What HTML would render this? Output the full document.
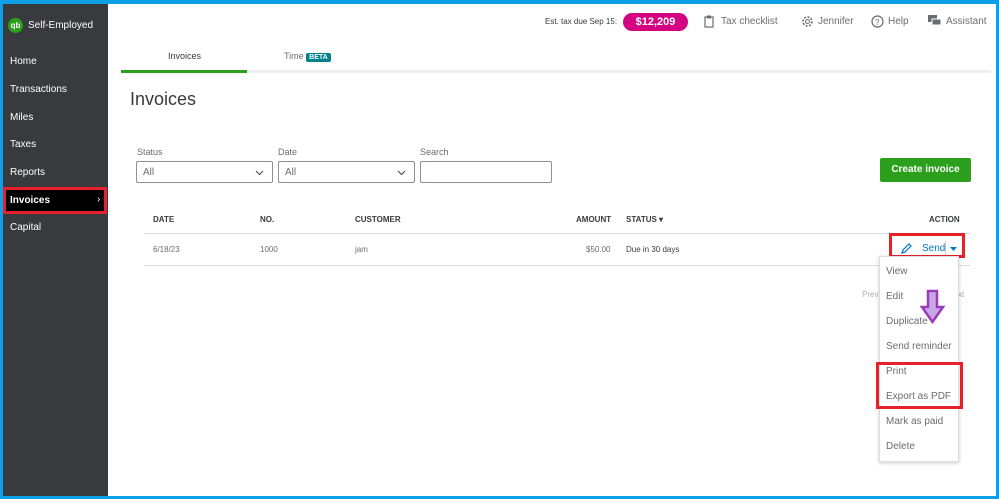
<!DOCTYPE html>
<html><head><style>
*{box-sizing:border-box;margin:0;padding:0}
body{width:999px;height:499px;overflow:hidden;font-family:"Liberation Sans",sans-serif;background:#fff;position:relative}
.frame{position:absolute;inset:0;border:3px solid #0ea0e6;border-top-width:4px;pointer-events:none;z-index:10}
.side{position:absolute;left:0;top:0;width:108px;height:499px;background:#393a3d;color:#fff}
.side .it{position:absolute;left:10px;font-size:10px}
.a{position:absolute;font-size:10px;color:#393a3d;white-space:nowrap}
.sel{position:absolute;height:22px;border:1px solid #8d9096;border-radius:2px;background:#fff}
.hd{position:absolute;font-size:8px;font-weight:bold;color:#393a3d}
.menu{position:absolute;left:879px;top:256px;width:80px;height:206px;background:#fff;border:1px solid #ddd;box-shadow:0 1px 4px rgba(0,0,0,.2)}
.menu div{position:absolute;left:6px;font-size:10px;color:#6b6c72}
.red{position:absolute;border:3px solid #e8202a}
svg{position:absolute}
</style></head><body>
<div class="side">
 <div style="position:absolute;left:8px;top:18px;width:15px;height:15px;border-radius:50%;background:#2ca01c;color:#fff;font-size:8px;font-weight:bold;text-align:center;line-height:15px">qb</div>
 <div class="it" style="left:28px;top:20px">Self-Employed</div>
 <div class="it" style="top:56px">Home</div>
 <div class="it" style="top:84px">Transactions</div>
 <div class="it" style="top:112px">Miles</div>
 <div class="it" style="top:139px">Taxes</div>
 <div class="it" style="top:167px">Reports</div>
 <div style="position:absolute;left:3px;top:187px;width:104px;height:27px;background:#000;border:3px solid #e8202a"></div>
 <div class="it" style="top:195px;font-weight:bold">Invoices</div>
 <div class="it" style="left:97px;top:194px">›</div>
 <div class="it" style="top:222px">Capital</div>
</div>
<div class="a" style="left:545px;top:17px;font-size:8px">Est. tax due Sep 15:</div>
<div style="position:absolute;left:623px;top:13px;width:65px;height:18px;border-radius:9px;background:#d4037f;color:#fff;font-weight:bold;font-size:11px;text-align:center;line-height:18px">$12,209</div>
<svg style="left:704px;top:15px" width="10" height="13"><rect x="1" y="2" width="8" height="10" fill="none" stroke="#6b6c72" stroke-width="1.2"/><rect x="3" y="0.5" width="4" height="3" fill="#6b6c72"/></svg>
<div class="a" style="left:721px;top:16px;color:#6b6c72">Tax checklist</div>
<svg style="left:801px;top:15px" width="13" height="13"><circle cx="6.5" cy="6.5" r="4.5" fill="none" stroke="#6b6c72" stroke-width="1.6" stroke-dasharray="2 1.5"/><circle cx="6.5" cy="6.5" r="2" fill="none" stroke="#6b6c72"/></svg>
<div class="a" style="left:818px;top:16px;color:#6b6c72">Jennifer</div>
<svg style="left:871px;top:15px" width="13" height="13"><circle cx="6.5" cy="6.5" r="5.5" fill="none" stroke="#6b6c72" stroke-width="1.2"/><text x="4" y="10" font-size="8" font-family="Liberation Sans" fill="#6b6c72">?</text></svg>
<div class="a" style="left:888px;top:16px;color:#6b6c72">Help</div>
<svg style="left:928px;top:15px" width="14" height="12"><rect x="0" y="0" width="9" height="7" fill="#6b6c72"/><rect x="4" y="4" width="9" height="6" fill="#6b6c72" stroke="#fff" stroke-width="1"/></svg>
<div class="a" style="left:946px;top:16px;color:#6b6c72">Assistant</div>
<div class="a" style="left:168px;top:51px;font-size:9px">Invoices</div>
<div class="a" style="left:284px;top:51px;font-size:9px;color:#6b6c72">Time <span style="background:#00838a;color:#fff;font-weight:bold;font-size:7px;padding:1px 3px;border-radius:2px">BETA</span></div>
<div style="position:absolute;left:121px;top:70px;width:870px;height:3px;background:#eceef1"></div>
<div style="position:absolute;left:121px;top:70px;width:126px;height:3px;background:#2ca01c"></div>
<div class="a" style="left:130px;top:89px;font-size:18px">Invoices</div>
<div class="a" style="left:137px;top:147px;font-size:9px;color:#6b6c72">Status</div>
<div class="a" style="left:278px;top:147px;font-size:9px;color:#6b6c72">Date</div>
<div class="a" style="left:420px;top:147px;font-size:9px;color:#6b6c72">Search</div>
<div class="sel" style="left:136px;top:161px;width:137px"><span class="a" style="left:6px;top:5px;color:#6b6c72">All</span><svg style="right:8px;top:8px" width="9" height="6"><path d="M1 1l3.5 3.5L8 1" fill="none" stroke="#555" stroke-width="1.2"/></svg></div>
<div class="sel" style="left:278px;top:161px;width:137px"><span class="a" style="left:6px;top:5px;color:#6b6c72">All</span><svg style="right:8px;top:8px" width="9" height="6"><path d="M1 1l3.5 3.5L8 1" fill="none" stroke="#555" stroke-width="1.2"/></svg></div>
<div class="sel" style="left:420px;top:161px;width:132px"></div>
<div style="position:absolute;left:880px;top:158px;width:91px;height:24px;background:#2ca01c;border-radius:2px;color:#fff;font-weight:bold;font-size:10px;text-align:center;line-height:24px">Create invoice</div>
<div class="hd" style="left:153px;top:215px">DATE</div>
<div class="hd" style="left:260px;top:215px">NO.</div>
<div class="hd" style="left:355px;top:215px">CUSTOMER</div>
<div class="hd" style="left:576px;top:215px">AMOUNT</div>
<div class="hd" style="left:626px;top:215px">STATUS ▾</div>
<div class="hd" style="left:929px;top:215px">ACTION</div>
<div style="position:absolute;left:144px;top:233px;width:826px;height:1px;background:#ddd"></div>
<div style="position:absolute;left:144px;top:265px;width:826px;height:1px;background:#ddd"></div>
<div class="a" style="left:153px;top:245px;font-size:8px;color:#6b6c72">6/18/23</div>
<div class="a" style="left:260px;top:245px;font-size:8px;color:#6b6c72">1000</div>
<div class="a" style="left:355px;top:245px;font-size:8px;color:#6b6c72">jam</div>
<div class="a" style="left:586px;top:245px;font-size:8px;color:#6b6c72">$50.00</div>
<div class="a" style="left:626px;top:245px;font-size:8px">Due in 30 days</div>
<div class="a" style="left:862px;top:290px;font-size:8px;color:#aaa">Prev</div>
<div class="a" style="left:958px;top:290px;font-size:8px;color:#aaa">xt</div>
<div class="red" style="left:889px;top:233px;width:76px;height:25px"></div>
<svg style="left:900px;top:243px" width="12" height="12"><path d="M2 10l1-3 6-6 2 2-6 6z" fill="none" stroke="#0077c5" stroke-width="1.2"/></svg>
<div class="a" style="left:922px;top:243px;color:#0077c5">Send</div>
<div style="position:absolute;left:945px;top:241px;width:1px;height:14px;background:#ccc"></div>
<svg style="left:950px;top:247px" width="7" height="5"><path d="M0 0h7L3.5 4z" fill="#0077c5"/></svg>
<div class="menu">
 <div style="top:9px">View</div><div style="top:34px">Edit</div><div style="top:59px">Duplicate</div>
 <div style="top:84px">Send reminder</div><div style="top:109px">Print</div><div style="top:134px">Export as PDF</div>
 <div style="top:159px">Mark as paid</div><div style="top:184px">Delete</div>
</div>
<div class="red" style="left:876px;top:362px;width:87px;height:47px"></div>
<svg style="left:920px;top:289px" width="26" height="36"><path d="M8 2h9v16h6L12.5 33 2 18h6z" fill="#c8a8e4" stroke="#9a3bb8" stroke-width="2.5"/></svg>
<div class="frame"></div>
</body></html>
